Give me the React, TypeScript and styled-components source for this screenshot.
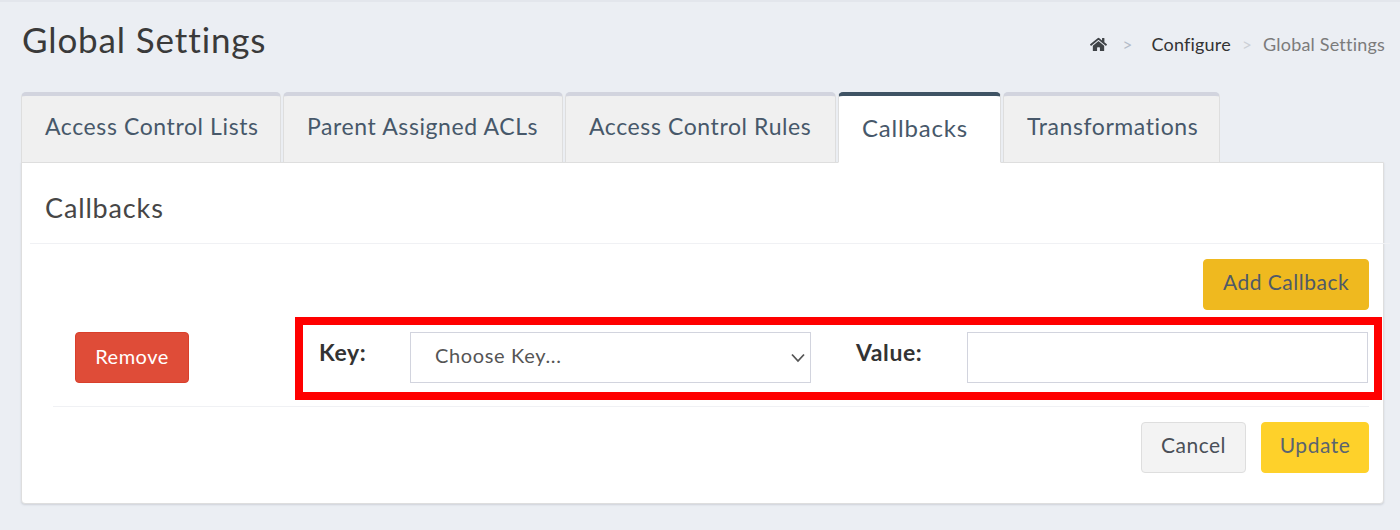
import React from "react";
import styled, { createGlobalStyle } from "styled-components";
import { FaHome } from "react-icons/fa";

const Global = createGlobalStyle`
  html, body { margin: 0; padding: 0; }
  body { background: #ebeef3; font-family: "Lato", "Open Sans", sans-serif; }
  * { box-sizing: border-box; }
`;

const Page = styled.div`
  height: 530px;
  overflow: hidden;
  border-top: 2px solid #e3e6ec;
  padding: 0 15px 0 21px;
`;

const Header = styled.header`
  display: flex;
  justify-content: space-between;
  align-items: flex-start;
  height: 90px;
`;

const Title = styled.h1`
  margin: 17px 0 0 1px;
  font-size: 35px;
  line-height: 40px;
  font-weight: 400;
  letter-spacing: 0.87px;
  color: #3a3a3a;
`;

const Breadcrumb = styled.nav`
  display: flex;
  align-items: center;
  height: 20px;
  margin-top: 32px;
  font-size: 18px;
  letter-spacing: 0.2px;
`;

const HomeLink = styled.span`
  display: flex;
  color: #3f4347;
  font-size: 17px;
`;

const Separator = styled.span<{ $first?: boolean }>`
  color: ${(p) => (p.$first ? "#b4bcc8" : "#ccd0d6")};
  font-size: 17px;
  margin: ${(p) => (p.$first ? "0 19px 0 15px" : "0 11px 0 11px")};
`;

const Crumb = styled.span<{ $current?: boolean }>`
  color: ${(p) => (p.$current ? "#7b7b7b" : "#333")};
`;

const TabBar = styled.div`
  display: flex;
  gap: 2px;
  align-items: flex-end;
  position: relative;
  z-index: 1;
  margin-bottom: -1px;
`;

const Tab = styled.div<{ $active?: boolean; $width: number }>`
  width: ${(p) => p.$width}px;
  height: 71px;
  padding: ${(p) => (p.$active ? "18px" : "16px")} 0 0 23px;
  background: ${(p) => (p.$active ? "#fff" : "#f0f0f0")};
  border: 1px solid #dedede;
  border-bottom: ${(p) => (p.$active ? "1px solid #fff" : "1px solid #dedede")};
  border-top: 4px solid ${(p) => (p.$active ? "#3f5364" : "#d2d4de")};
  border-radius: 5px 5px 0 0;
  font-size: ${(p) => (p.$active ? "24px" : "23px")};
  line-height: 28px;
  letter-spacing: ${(p) => (p.$active ? "0.8px" : "0.6px")};
  color: #47586a;
  white-space: nowrap;
`;

const Panel = styled.section`
  width: 1363px;
  height: 342px;
  background: #fff;
  border: 1px solid #dedede;
  border-radius: 0 0 4px 4px;
  box-shadow: 0 1px 2px rgba(90, 100, 120, 0.2);
`;

const PanelHeading = styled.h2`
  margin: 0 -7px 0 8px;
  height: 81px;
  padding: 30px 0 0 15px;
  font-size: 27px;
  line-height: 30px;
  font-weight: 400;
  letter-spacing: 0.85px;
  color: #464646;
  border-bottom: 1px solid #f0f1f4;
`;

const Body = styled.div`
  padding: 15px 14px 0 31px;
`;

const Actions = styled.div`
  display: flex;
  justify-content: flex-end;
  gap: 15px;
`;

const Button = styled.button<{ $bg: string; $line: string; $fg: string; $width: number }>`
  flex: none;
  width: ${(p) => p.$width}px;
  height: 51px;
  padding: 0 0 7px;
  background: ${(p) => p.$bg};
  border: 1px solid ${(p) => p.$line};
  border-radius: 4px;
  color: ${(p) => p.$fg};
  font-family: inherit;
  font-size: 21px;
  letter-spacing: 0.5px;
`;

const RemoveButton = styled(Button)`
  font-size: 20px;
  padding-bottom: 3px;
`;

const Row = styled.div`
  display: flex;
  align-items: flex-start;
  justify-content: space-between;
  margin-top: 22px;
  padding: 0 1px 23px 22px;
  border-bottom: 1px solid #f0f1f4;
`;

const Fields = styled.div`
  position: relative;
  width: 1073px;
  display: grid;
  grid-template-columns: 115px 401px 156px 401px;
  align-items: start;
`;

const Highlight = styled.div`
  position: absolute;
  inset: -15px -14px -17px 0;
  border: 8px solid #ff0000;
  pointer-events: none;
`;

const Label = styled.label<{ $indent: number }>`
  margin: 3px 0 0 ${(p) => p.$indent}px;
  font-size: 23px;
  line-height: 34px;
  font-weight: 700;
  letter-spacing: 0.6px;
  color: #333;
`;

const SelectWrap = styled.div`
  position: relative;
  width: 401px;
  height: 51px;
`;

const KeySelect = styled.select`
  appearance: none;
  display: block;
  width: 100%;
  height: 100%;
  padding: 0 0 5px 24px;
  background: #fff;
  border: 1px solid #d2d4de;
  border-radius: 0;
  color: #555;
  font-family: inherit;
  font-size: 20px;
  letter-spacing: 0.65px;
`;

const Chevron = styled.svg`
  position: absolute;
  top: 21px;
  right: 5px;
  width: 16px;
  height: 10px;
  pointer-events: none;
`;

const ValueInput = styled.input`
  width: 401px;
  height: 51px;
  background: #fff;
  border: 1px solid #d2d4de;
  border-radius: 0;
`;

const Footer = styled(Actions)`
  margin-top: 15px;
`;

const tabs = [
  { label: "Access Control Lists", width: 260 },
  { label: "Parent Assigned ACLs", width: 280 },
  { label: "Access Control Rules", width: 271 },
  { label: "Callbacks", width: 163, active: true },
  { label: "Transformations", width: 217 },
];

export default function App() {
  return (
    <Page>
      <Global />
      <Header>
        <Title>Global Settings</Title>
        <Breadcrumb>
          <HomeLink><FaHome /></HomeLink>
          <Separator $first>&gt;</Separator>
          <Crumb>Configure</Crumb>
          <Separator>&gt;</Separator>
          <Crumb $current>Global Settings</Crumb>
        </Breadcrumb>
      </Header>
      <TabBar>
        {tabs.map((t) => (
          <Tab key={t.label} $active={t.active} $width={t.width}>{t.label}</Tab>
        ))}
      </TabBar>
      <Panel>
        <PanelHeading>Callbacks</PanelHeading>
        <Body>
          <Actions>
            <Button $bg="#efb91f" $line="#efb91f" $fg="#4f5a68" $width={166}>Add Callback</Button>
          </Actions>
          <Row>
            <RemoveButton $bg="#df4c38" $line="#d93f2b" $fg="#fff" $width={114}>Remove</RemoveButton>
            <Fields>
              <Label $indent={24}>Key:</Label>
              <SelectWrap>
                <KeySelect defaultValue="">
                  <option value="">Choose Key...</option>
                </KeySelect>
                <Chevron viewBox="0 0 16 10" fill="none">
                  <path d="M2 1.5 L8 8 L14 1.5" stroke="#555" strokeWidth="1.8" />
                </Chevron>
              </SelectWrap>
              <Label $indent={45}>Value:</Label>
              <ValueInput />
              <Highlight />
            </Fields>
          </Row>
          <Footer>
            <Button $bg="#f3f3f3" $line="#dedede" $fg="#4a4f57" $width={105}>Cancel</Button>
            <Button $bg="#fed12a" $line="#fed12a" $fg="#5a6470" $width={108}>Update</Button>
          </Footer>
        </Body>
      </Panel>
    </Page>
  );
}
